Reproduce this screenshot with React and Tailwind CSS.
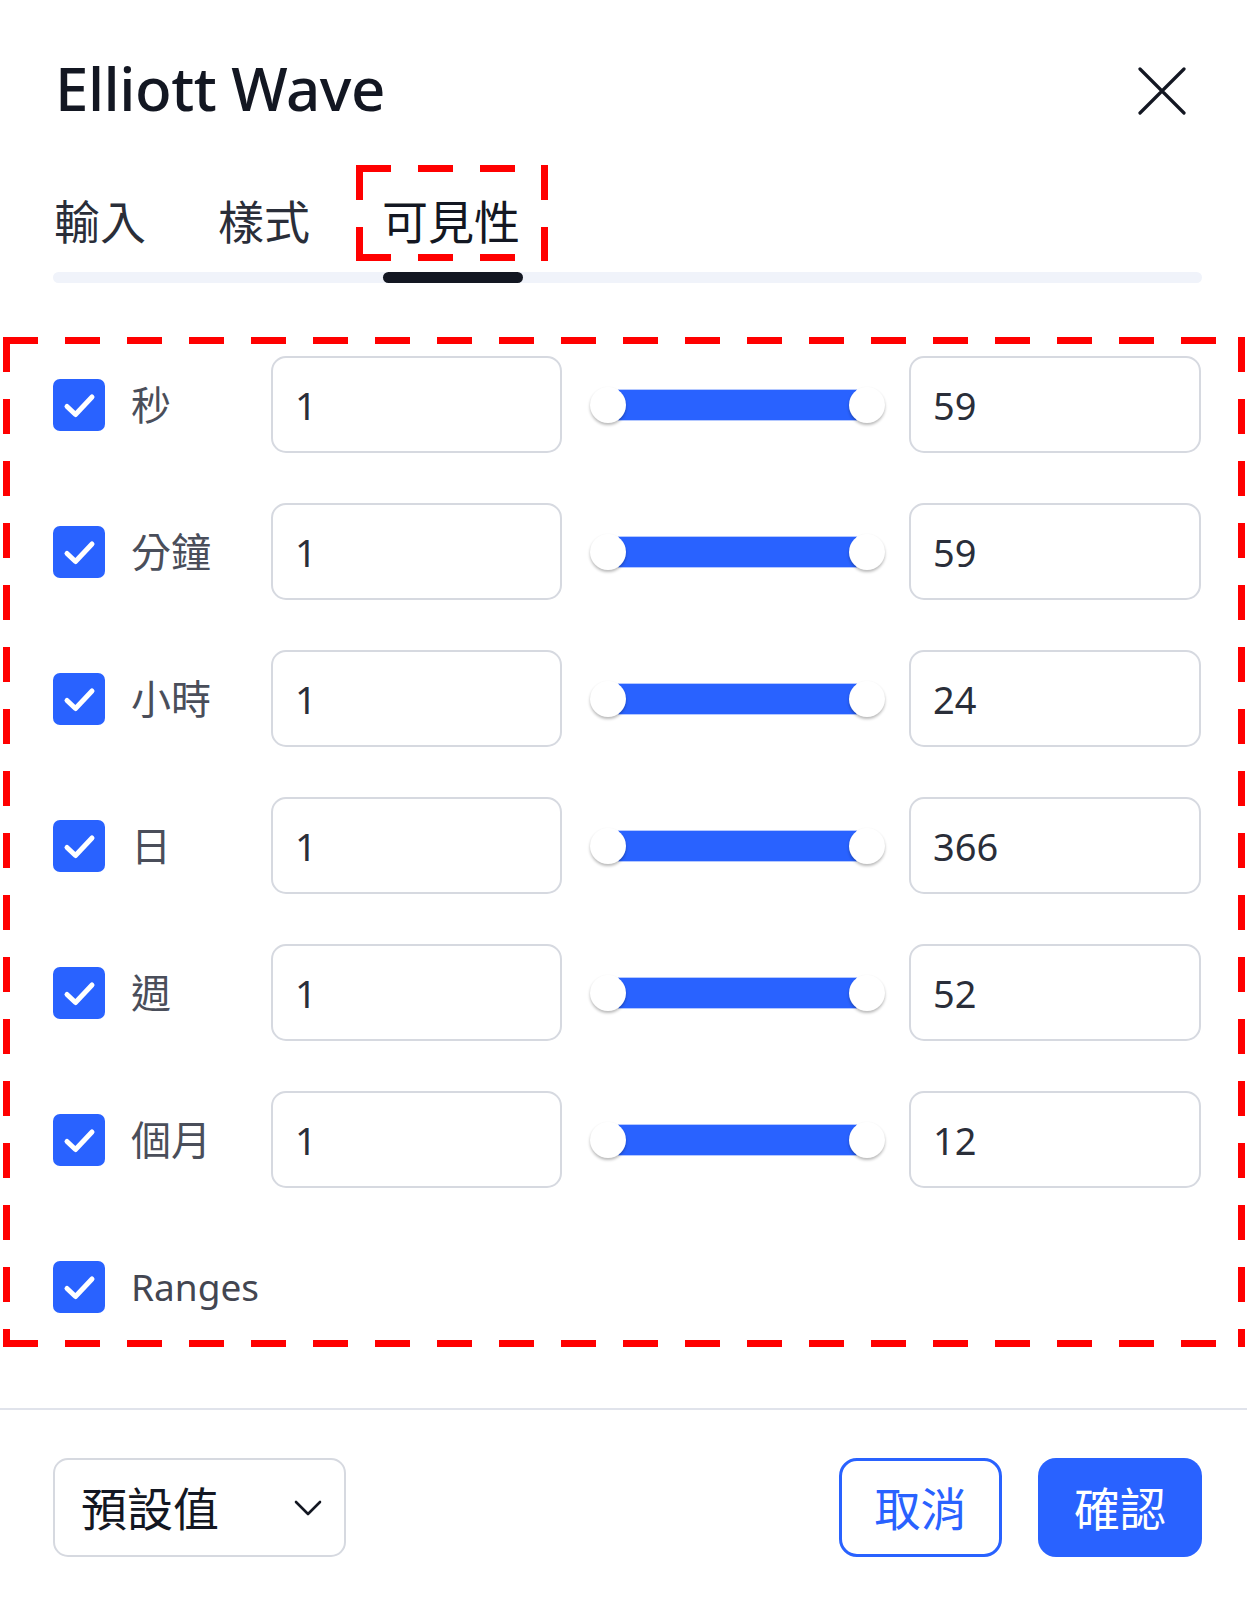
import React from 'react'

const font = { fontFamily: '"Noto Sans", "Noto Sans CJK TC", sans-serif' }

const rows = [
    { label: '秒', min: '1', max: '59' },
    { label: '分鐘', min: '1', max: '59' },
    { label: '小時', min: '1', max: '24' },
    { label: '日', min: '1', max: '366' },
    { label: '週', min: '1', max: '52' },
    { label: '個月', min: '1', max: '12' },
]

const inputCls = "flex h-[97px] items-center rounded-[15px] border-2 border-[#d6d9e0] bg-white pl-[22px] text-[38px] leading-none text-[#2a2e39]"

function Checkbox() {
    return (
        <div className="flex h-[52px] w-[52px] items-center justify-center rounded-[7px] bg-[#2962ff]">
            <svg width="52" height="52" viewBox="0 0 52 52" fill="none">
                <path d="M14 27.5l8.5 8L39 18" stroke="white" strokeWidth="5" strokeLinecap="round" strokeLinejoin="round" />
            </svg>
        </div>
    )
}

function RangeSlider() {
    return (
        <div className="flex items-center pl-[28px] pr-[24px]">
            <span className="relative z-10 h-[36px] w-[36px] shrink-0 rounded-full bg-white shadow-[0_2px_3px_rgba(0,0,0,0.28)]" />
            <div className="-mx-[7px] h-[30px] flex-1 bg-[#2962ff] shadow-[0_0_0_1px_rgba(41,98,255,0.35)]" />
            <span className="relative z-10 h-[36px] w-[36px] shrink-0 rounded-full bg-white shadow-[0_2px_3px_rgba(0,0,0,0.28)]" />
        </div>
    )
}

export default function App() {
    return (
        <div className="relative h-[1600px] w-[1247px] overflow-hidden bg-white" style={font}>
            {/* header */}
            <div className="flex items-center justify-between pl-[55px] pr-[61px] pt-[58px]">
                <h1 className="text-[60px] font-medium leading-none tracking-[-0.5px] text-[#131722]">Elliott Wave</h1>
                <svg width="48" height="48" viewBox="0 0 48 48" className="mt-[6px]">
                    <path d="M2 2L46 46M46 2L2 46" stroke="#131722" strokeWidth="3.2" strokeLinecap="round" />
                </svg>
            </div>

            {/* tabs */}
            <div className="mt-[80px] pl-[53px] pr-[45px]">
                <div className="flex gap-[72px] pl-[1px] text-[46px] leading-none">
                    <span className="text-[#2a2e39]">輸入</span>
                    <span className="text-[#2a2e39]">樣式</span>
                    <span className="text-[#131722]">可見性</span>
                </div>
                <div className="mt-[28px] h-[11px] rounded-full bg-[#f0f3fa]">
                    <div className="ml-[330px] h-[11px] w-[140px] rounded-full bg-[#131722]" />
                </div>
            </div>

            {/* visibility rows */}
            <div className="mt-[73px] flex flex-col gap-[50px] px-[53px]">
                {rows.map(r => (
                    <div key={r.label} className="grid h-[97px] grid-cols-[78px_140px_291px_347px_292px] items-center">
                        <Checkbox />
                        <span className="text-[40px] leading-none text-[#4a4e5a]">{r.label}</span>
                        <div className={inputCls}>{r.min}</div>
                        <RangeSlider />
                        <div className={inputCls}>{r.max}</div>
                    </div>
                ))}
                <div className="flex h-[97px] items-center">
                    <Checkbox />
                    <span className="ml-[26px] text-[37px] leading-none text-[#434651]">Ranges</span>
                </div>
            </div>

            <div className="mt-[73px] h-[2px] bg-[#e0e3eb]" />

            {/* footer */}
            <div className="flex items-center justify-between pl-[53px] pr-[45px] pt-[48px]">
                <div className="flex h-[99px] w-[293px] items-center justify-between rounded-[15px] border-2 border-[#d6d9e0] pl-[26px] pr-[22px]">
                    <span className="text-[46px] leading-none text-[#131722]">預設值</span>
                    <svg width="28" height="16" viewBox="0 0 28 16" fill="none">
                        <path d="M2 2l12 12L26 2" stroke="#131722" strokeWidth="2.6" strokeLinecap="round" strokeLinejoin="round" />
                    </svg>
                </div>
                <div className="flex gap-[36px]">
                    <button className="flex h-[99px] w-[163px] items-center justify-center rounded-[18px] border-[3px] border-[#2962ff] bg-white text-[46px] leading-none text-[#2962ff]">取消</button>
                    <button className="flex h-[99px] w-[164px] items-center justify-center rounded-[18px] bg-[#2962ff] text-[46px] leading-none text-white">確認</button>
                </div>
            </div>

            {/* red dashed annotation boxes */}
            <svg className="pointer-events-none absolute left-0 top-0" width="1247" height="1600">
                <g stroke="#ff0000" strokeWidth="7" strokeDasharray="35 27" fill="none">
                    <line x1="356" y1="168.5" x2="548" y2="168.5" />
                    <line x1="359.5" y1="165" x2="359.5" y2="261" />
                    <line x1="544.5" y1="165" x2="544.5" y2="261" />
                    <line x1="356" y1="257.5" x2="548" y2="257.5" />

                    <line x1="3" y1="340.5" x2="1245" y2="340.5" />
                    <line x1="6.5" y1="337" x2="6.5" y2="1347" />
                    <line x1="1241.5" y1="337" x2="1241.5" y2="1347" />
                    <line x1="3" y1="1343.5" x2="1245" y2="1343.5" />
                </g>
            </svg>
        </div>
    )
}
